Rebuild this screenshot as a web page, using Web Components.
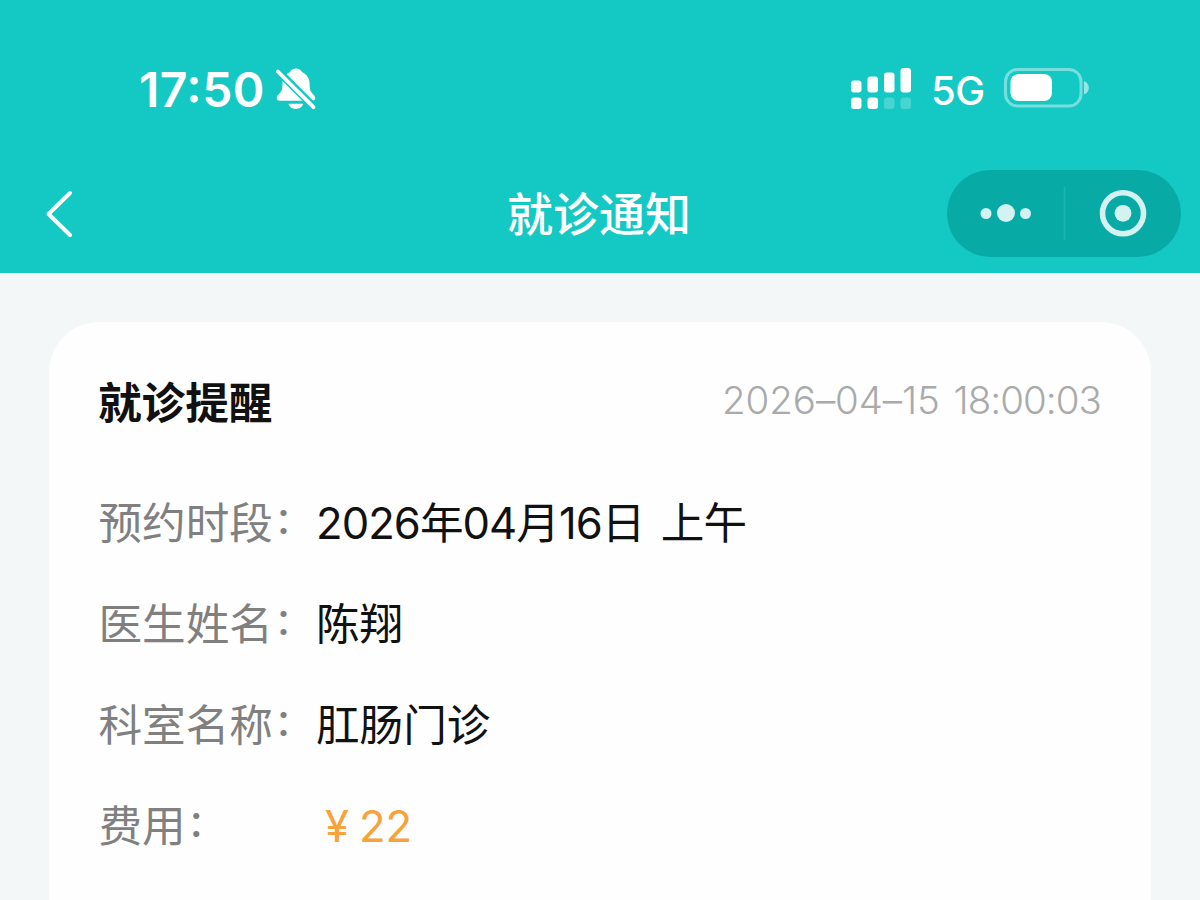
<!DOCTYPE html>
<html lang="zh-CN">
<head>
<meta charset="utf-8">
<title>就诊通知</title>
<style>
html,body{margin:0;height:100%}
body{width:1200px;height:900px;overflow:hidden;background:#f3f7f8;font-family:Inter,"Noto Sans CJK SC",sans-serif}
</style>
</head>
<body>
<visit-app></visit-app>
<script>
function define(name, html) {
  const t = document.createElement('template');
  t.innerHTML = html;
  customElements.define(name, class extends HTMLElement {
    constructor() {
      super();
      this.attachShadow({ mode: 'open' }).append(t.content.cloneNode(true));
    }
  });
}

define('bell-off-icon', `<style>:host{display:block;width:42px;height:44px}svg{display:block}</style>
<svg width="42" height="44" viewBox="0 0 42 44">
  <path fill="#fff" d="M21 1.500c2.800 0 5 1.300 5.900 3.400 5 2.200 7.600 6.400 7.700 11.600.1 5.500.6 7.800 3.400 10.800 1.500 1.600 2.200 2.600 2.200 3.900 0 1.600-1.200 2.500-3 2.500H4.700c-1.900 0-3-1-3-2.600 0-1.500.8-2.500 2.400-4.100C6.800 24.300 7.400 22 7.500 16.500c.2-5.200 2.800-9.400 7.600-11.600.9-2.100 3.100-3.400 5.900-3.400z"/>
  <path fill="#fff" d="M13.500 36.800h14.500c-.7 3.200-3.600 5.200-7.200 5.200s-6.600-2-7.300-5.200z"/>
  <path stroke="#14c8c4" stroke-width="7.800" d="M0 1 43 44"/>
  <path stroke="#fff" stroke-width="3.800" stroke-linecap="round" d="M2.800 4.500 38.500 40.200"/>
</svg>`);

define('signal-icon', `<style>:host{display:block;width:60px;height:42px}svg{display:block}</style>
<svg width="60" height="42" viewBox="0 0 60 42" fill="#fff">
  <rect x="0" y="12.500" width="10.500" height="12" rx="3"/><rect x="16.500" y="8.500" width="10.500" height="16" rx="3"/>
  <rect x="33" y="4.500" width="10.500" height="20" rx="3"/><rect x="49.500" y="0" width="10.500" height="24.500" rx="3"/>
  <rect x="0" y="29.500" width="10.500" height="11.500" rx="3"/><rect x="16.500" y="29.500" width="10.500" height="11.500" rx="3"/>
  <g opacity=".22"><rect x="33" y="29.500" width="10.500" height="11.500" rx="3"/><rect x="49.500" y="29.500" width="10.500" height="11.500" rx="3"/></g>
</svg>`);

define('battery-icon', `<style>:host{display:block;width:85px;height:40px}svg{display:block}</style>
<svg width="85" height="40" viewBox="0 0 85 40">
  <rect x="1.500" y="1.500" width="75.500" height="36.500" rx="12" fill="none" stroke="#fff" stroke-opacity=".42" stroke-width="3"/>
  <rect x="6.500" y="6" width="41.500" height="27" rx="8" fill="#fff"/>
  <path d="M80 13c3 1.200 4.800 3.600 4.800 6.800s-1.800 5.600-4.800 6.800z" fill="#fff" fill-opacity=".55"/>
</svg>`);

define('status-bar', `<style>
:host{display:flex;align-items:flex-start;height:160px;box-sizing:border-box;padding:66px 111px 0 139px;color:#fff}
.time{font-size:48px;font-weight:600;line-height:48px;width:136px;letter-spacing:.5px;white-space:nowrap;font-feature-settings:"case" 1}
bell-off-icon{margin-top:1px}
signal-icon{margin:1.500px 20px 0 auto}
.net{font-size:40px;font-weight:500;line-height:50px;width:54px;margin-right:19px;letter-spacing:-.5px}
battery-icon{margin-top:2px}
</style><span class="time">17:50</span><bell-off-icon></bell-off-icon><signal-icon></signal-icon><span class="net">5G</span><battery-icon></battery-icon>`);

define('capsule-menu', `<style>
:host{display:block;width:234px;height:87px;border-radius:44px;background:#08aaa6}svg{display:block}
</style><svg width="234" height="87" viewBox="0 0 234 87" fill="#d3f2f0">
  <circle cx="39" cy="43.500" r="5.500"/><circle cx="59" cy="43" r="9"/><circle cx="78.500" cy="43.500" r="5.500"/>
  <path d="M117.500 17v53" stroke="#1fb4b0" stroke-width="1.500"/>
  <circle cx="176" cy="43.300" r="20.500" fill="none" stroke="#d3f2f0" stroke-width="5.600"/><circle cx="176" cy="43.300" r="8.400"/>
</svg>`);

define('nav-bar', `<style>
:host{display:grid;grid-template-columns:1fr auto 1fr;height:113px;box-sizing:border-box;padding:10px 19px 0 44px;color:#fff}
svg{display:block;margin-top:19px}
h1{margin:0;font-size:46px;font-weight:500;line-height:66px;padding-top:11px;transform:translateX(-13.500px)}
capsule-menu{justify-self:end}
</style><svg width="30" height="50" viewBox="0 0 30 50"><path d="M26 4 4.500 25 26 46" fill="none" stroke="#fff" stroke-width="4" stroke-linecap="round" stroke-linejoin="round"/></svg>
<h1><slot></slot></h1><capsule-menu></capsule-menu>`);

define('info-row', `<style>
:host{display:flex;height:101px;align-items:center;font-size:43.600px;line-height:64px;color:#111;white-space:nowrap}
.label{width:217.500px;margin-left:-.5px;color:#808080;flex:none}
.colon{position:relative;left:1.500px;top:-4.500px;font-size:36px;font-weight:500;line-height:1}
</style><span class="label"><slot name="label"></slot><span class="colon">：</span></span><span class="value"><slot></slot></span>`);

define('notice-card', `<style>
:host{display:block;margin:49px 49px 0;height:620px;box-sizing:border-box;padding:46px 50px 0;background:#fefefe;border-radius:50px 50px 0 0}
header{display:flex;justify-content:space-between;height:105px;align-items:flex-start}
h2{margin:0 0 0 -1px;font-size:43.600px;line-height:72px;font-weight:700;color:#111}
time{font-size:38.500px;line-height:64px;font-weight:350;color:#aaa;white-space:nowrap}
</style><header><h2><slot name="title"></slot></h2><time><slot name="time"></slot></time></header><slot></slot>`);

define('visit-app', `<style>
:host{display:block;height:900px}
.top{background:#14c8c4;height:273px}
.day{letter-spacing:-.1px;word-spacing:3px}
.clock{letter-spacing:-.95px}
.d{letter-spacing:-.95px;word-spacing:5px}
.fee{color:#f7a23b;display:inline-flex;gap:10px;padding-left:9px}
</style>
<div class="top"><status-bar></status-bar><nav-bar>就诊通知</nav-bar></div>
<notice-card><span slot="title">就诊提醒</span><span slot="time"><span class="day">2026–04–15 </span><span class="clock">18:00:03</span></span>
<info-row><span slot="label">预约时段</span><span class="d">2026年04月16日 上午</span></info-row>
<info-row><span slot="label">医生姓名</span>陈翔</info-row>
<info-row><span slot="label">科室名称</span>肛肠门诊</info-row>
<info-row><span slot="label">费用</span><span class="fee"><span>¥</span><span>22</span></span></info-row>
</notice-card>`);
</script>
</body>
</html>
